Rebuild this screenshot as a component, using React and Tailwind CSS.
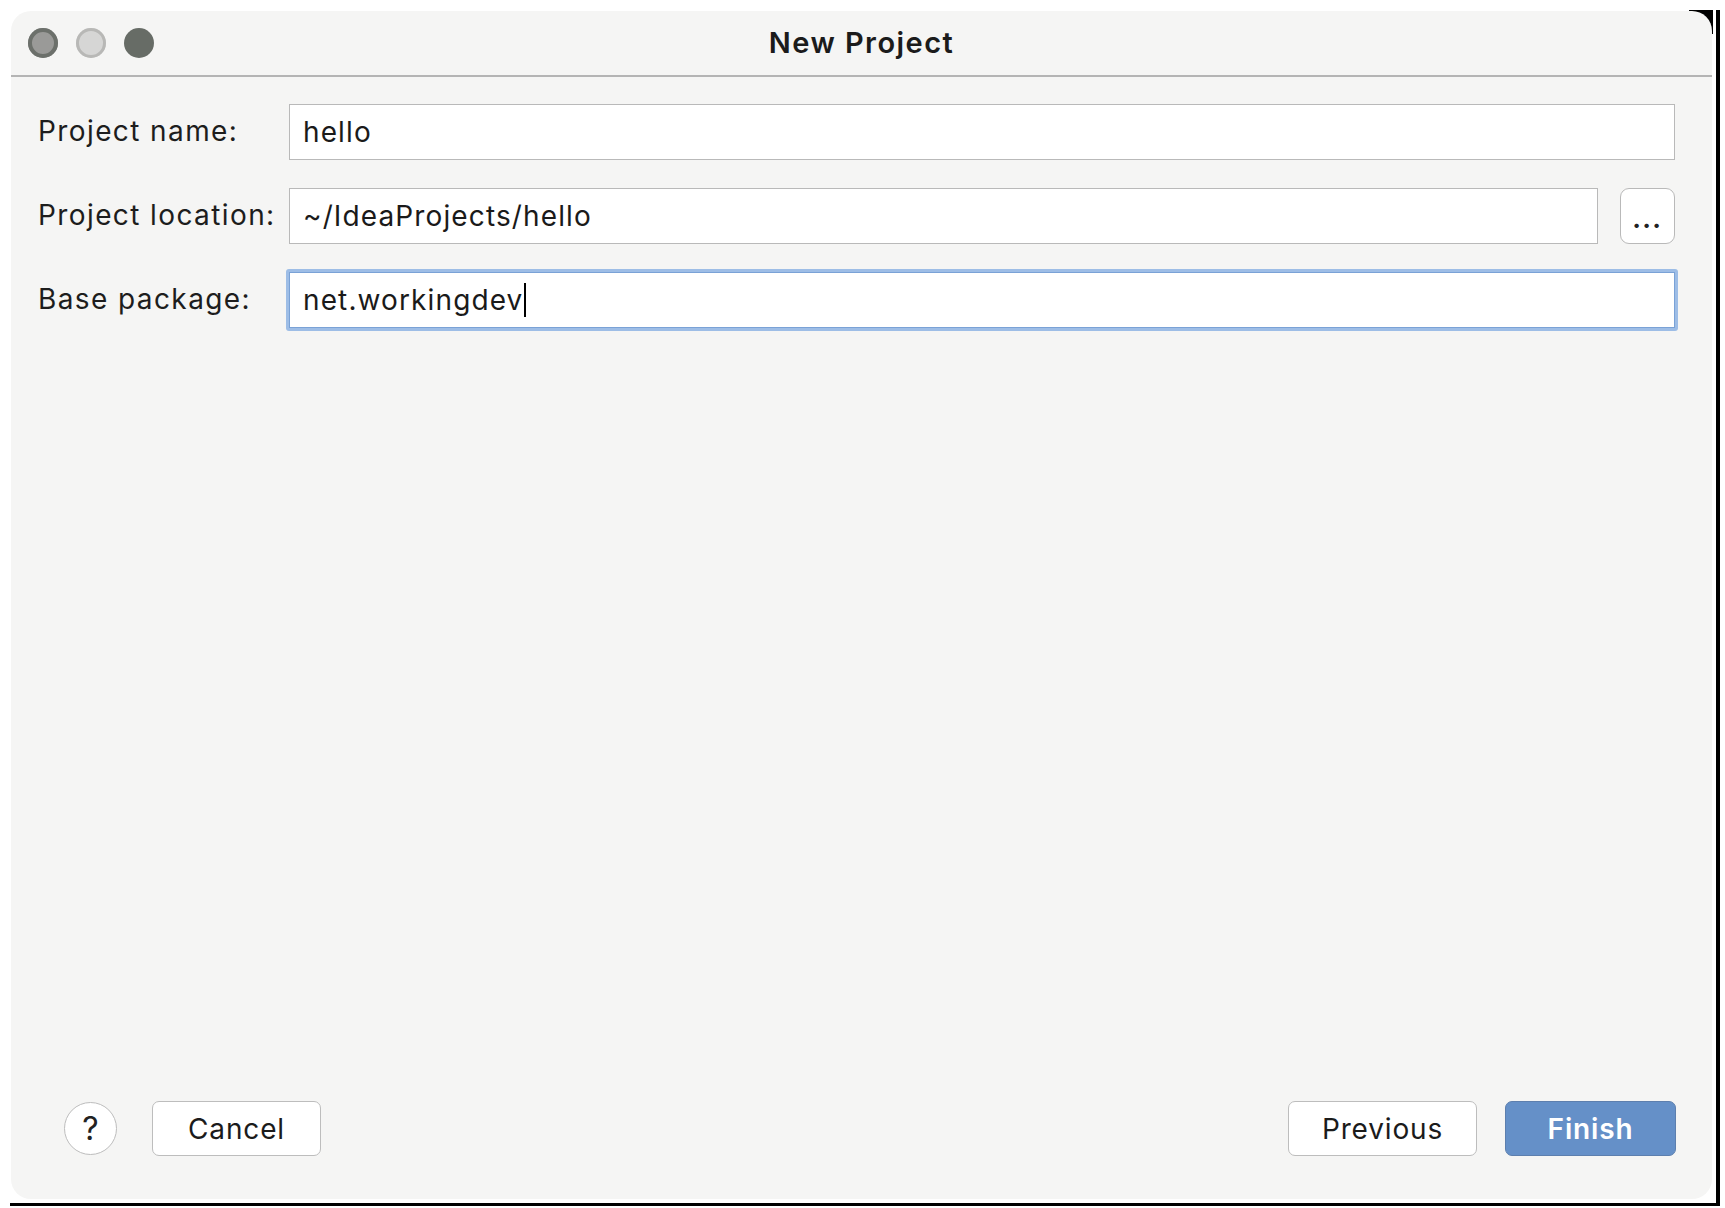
const font = { fontFamily: 'Inter, "Noto Sans", sans-serif' };

function Field({ label, value, focused, trailing }) {
  return (
    <div className="flex items-center">
      <label className="w-[251px] shrink-0 -mt-[3px] text-[28px] tracking-[0.05em] text-[#1d1d1d]">{label}</label>
      <div className="flex flex-1 items-center gap-[22px]">
        <div
          className={
            focused
              ? 'flex-1 rounded-[3px] p-[3px] bg-[#9dbde6] -mx-[3px] -my-[3px]'
              : 'flex-1'
          }
        >
          <div
            className={
              'flex h-[56px] items-center bg-white px-[13px] text-[28px] tracking-[0.04em] text-[#1a1a1a] border ' +
              (focused ? 'border-[#7aa2d6]' : 'border-[#b9b9b9]')
            }
          >
            <span>{value}</span>
            {focused ? <span className="ml-[1px] inline-block h-[34px] w-[2px] bg-black" /> : null}
          </div>
        </div>
        {trailing}
      </div>
    </div>
  );
}

function Light({ className }) {
  return <span className={'block h-[30px] w-[30px] rounded-full ' + className} />;
}

export default function App() {
  return (
    <div className="min-h-screen bg-white pl-[10px] pt-[10px]" style={font}>
      <div className="relative flex w-[1710px] border-b-[3px] border-r-[4px] border-black pb-[4px] pr-[3px]">
        <span className="absolute right-[3px] top-0 h-[24px] w-[24px] bg-black" />
        <div className="relative flex h-[1188px] w-[1701px] flex-col rounded-[20px] bg-[#f5f5f4] ml-[1px] mt-[1px]">
          {/* title bar */}
          <div className="relative flex h-[66px] items-center justify-center border-b-2 border-[#b4b4b4]">
            <div className="absolute left-[17px] top-[17px] flex gap-[18px]">
              <Light className="bg-[#9a9a98] ring-[4px] ring-inset ring-[#6c706b]" />
              <Light className="bg-[#d6d6d5] ring-[3px] ring-inset ring-[#b8b8b6]" />
              <Light className="bg-[#676c66]" />
            </div>
            <h1 className="text-[29px] font-semibold tracking-[0.05em] text-[#1b1b1b]">New Project</h1>
          </div>

          {/* form */}
          <div className="flex flex-col gap-[28px] pl-[27px] pr-[37px] pt-[27px]">
            <Field label="Project name:" value="hello" />
            <Field
              label="Project location:"
              value="~/IdeaProjects/hello"
              trailing={
                <button className="flex h-[56px] w-[55px] items-end justify-center rounded-[9px] border border-[#b9b9b9] bg-white pb-[12px] text-[22px] font-black leading-none tracking-[0.08em] text-[#222]">
                  ...
                </button>
              }
            />
            <Field label="Base package:" value="net.workingdev" focused />
          </div>

          <div className="flex-1" />

          {/* footer */}
          <div className="flex items-center pb-[43px] pl-[53px] pr-[36px]">
            <button className="flex h-[53px] w-[53px] items-center justify-center rounded-full border border-[#bdbdbd] bg-white text-[32px] font-normal text-[#222]">
              ?
            </button>
            <button className="ml-[35px] h-[55px] w-[169px] rounded-[7px] border border-[#bdbdbd] bg-white text-[28px] tracking-[0.03em] text-[#1b1b1b]">
              Cancel
            </button>
            <div className="flex-1" />
            <button className="h-[55px] w-[189px] rounded-[7px] border border-[#bdbdbd] bg-white text-[28px] tracking-[0.03em] text-[#1b1b1b]">
              Previous
            </button>
            <button className="ml-[28px] h-[55px] w-[171px] rounded-[7px] border border-[#5d7fae] bg-[#6590c8] text-[28px] font-semibold tracking-[0.03em] text-white">
              Finish
            </button>
          </div>
        </div>
      </div>
    </div>
  );
}
